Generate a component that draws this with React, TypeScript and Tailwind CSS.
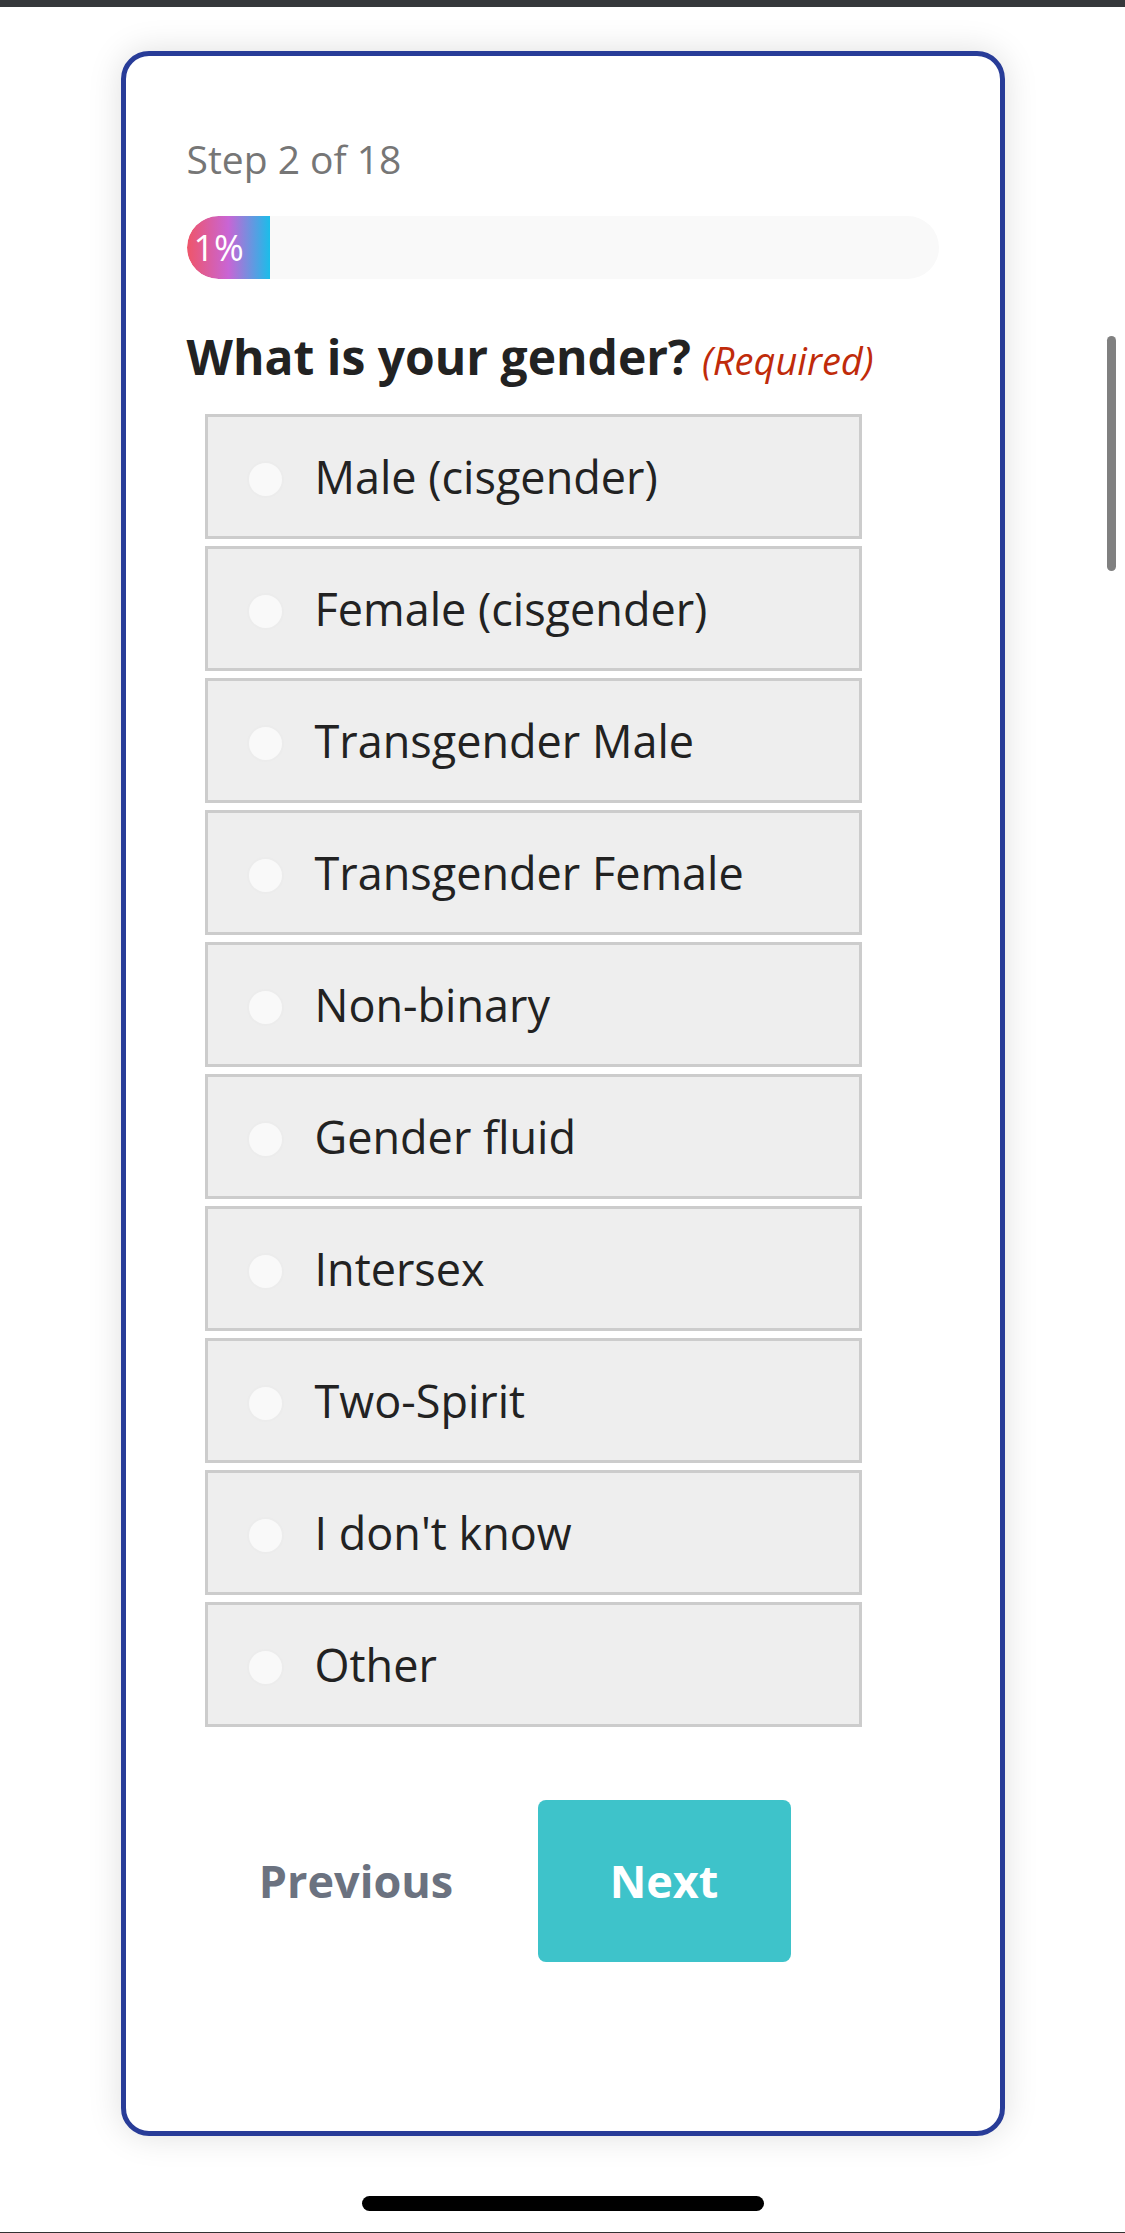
import React from "react";

const options = [
  "Male (cisgender)",
  "Female (cisgender)",
  "Transgender Male",
  "Transgender Female",
  "Non-binary",
  "Gender fluid",
  "Intersex",
  "Two-Spirit",
  "I don't know",
  "Other",
];

export default function App() {
  return (
    <div
      className="relative min-h-[2233px] w-[1125px] bg-white flex flex-col"
      style={{ fontFamily: '"Open Sans", "Liberation Sans", sans-serif' }}
    >
      <div className="h-[7px] w-full bg-[#35383b]" />
      <div className="mx-auto mt-[44px] w-[884px] rounded-[28px] border-[5px] border-[#283c98] bg-white pl-[61px] pr-[61px] pt-[81px] pb-[169px] shadow-[0_0_34px_rgba(0,0,0,0.13)]">
        <div className="text-[39px] leading-[44px] text-[#767676]">Step 2 of 18</div>
        <div className="mt-[35px] h-[63px] w-full rounded-full bg-[#f9f9f9] overflow-hidden flex">
          <div className="h-full w-[83px] rounded-l-full bg-[linear-gradient(90deg,#ef5569_0%,#c865d5_50%,#1bbde9_100%)] pl-[7px] text-[36px] leading-[63px] text-white">
            1%
          </div>
        </div>
        <div className="mt-[50px] h-[56px] flex items-baseline leading-[56px]">
          <span className="text-[48px] font-bold text-[#222222]">What is your gender?</span>
          <span className="ml-[11px] text-[38px] italic text-[#c02b0a]">(Required)</span>
        </div>
        <div className="mt-[29px] ml-[18px] flex w-[657px] flex-col gap-[7px]">
          {options.map((o) => (
            <label
              key={o}
              className="flex h-[125px] items-center border-[3px] border-[#cccccc] bg-[#eeeeee] pl-[39px]"
            >
              <span className="mt-[5px] h-[37px] w-[37px] shrink-0 rounded-full border-2 border-[#ececec] bg-[#f9f9f9]" />
              <span className="ml-[31px] text-[45px] leading-[56px] text-[#222222]">{o}</span>
            </label>
          ))}
        </div>
        <div className="mt-[73px] ml-[43px] flex gap-[55px]">
          <button className="flex h-[162px] w-[253px] items-center justify-center text-[45px] font-bold text-[#6b7280]">
            Previous
          </button>
          <button className="flex h-[162px] w-[253px] items-center justify-center rounded-[8px] bg-[#3ec3ca] text-[45px] font-bold text-white">
            Next
          </button>
        </div>
      </div>
      <div className="mx-auto mt-[60px] h-[15px] w-[402px] rounded-full bg-black" />
      <div className="mt-auto h-px w-full bg-[#333333]" />
      <div className="absolute left-[1107px] top-[336px] h-[235px] w-[9px] rounded-full bg-[#808080]" />
    </div>
  );
}
